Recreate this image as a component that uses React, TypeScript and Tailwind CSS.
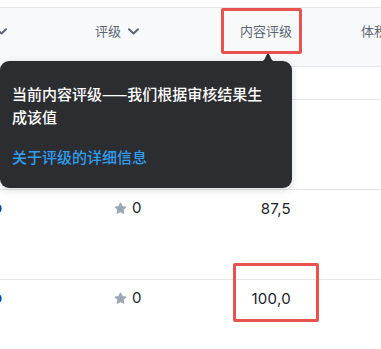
import React from "react";

function Chevron({ className = "" }: { className?: string }) {
  return (
    <svg className={className} width="11" height="7" viewBox="0 0 11 7" fill="none">
      <path d="M1 1.2 L5.5 5.5 L10 1.2" stroke="#5b6573" strokeWidth="2" strokeLinecap="round" strokeLinejoin="round" />
    </svg>
  );
}

function Star() {
  return (
    <svg width="13" height="13" viewBox="0 0 24 24" fill="#9aa7b4" stroke="#9aa7b4" strokeWidth="2.5" strokeLinejoin="round">
      <path d="M12 2.5l2.9 6.1 6.6.8-4.9 4.6 1.3 6.6L12 17.3l-5.9 3.3 1.3-6.6-4.9-4.6 6.6-.8z" />
    </svg>
  );
}

function DataRow({ value, h, border }: { value: string; h: string; border: boolean }) {
  return (
    <div className={`flex ${h} ${border ? "border-b border-[#e4e6ea]" : ""}`}>
      <div className="w-[95px] shrink-0 overflow-hidden pt-[8px]">
        <div className="-ml-[7px] flex flex-col">
          <span className="text-[15px] leading-[20px] text-[#1e3a8a] font-semibold">o</span>
          <span className="text-[9px] leading-[12px] text-[#9aa1aa] -ml-[1px]">^</span>
        </div>
      </div>
      <div className="w-[115px] shrink-0 pt-[8px] pl-[19px] flex items-center gap-[5px] self-start">
        <Star />
        <span className="text-[15px] leading-[20px] text-[#1b1d2a]">0</span>
      </div>
      <div className="w-[95px] shrink-0 pt-[9px] pr-[14px] text-right text-[15px] leading-[20px] text-[#1b1d2a] tracking-[0.3px]">
        {value}
      </div>
      <div className="flex-1" />
    </div>
  );
}

export default function App() {
  return (
    <div className="relative w-[381px] h-[349px] overflow-hidden bg-white font-['Inter','Noto_Sans_CJK_SC',sans-serif]">
      <div className="h-[8px] border-b border-[#e4e6ea] bg-white" />
      <div className="flex h-[59px] bg-[#f8f9fb] border-b border-[#e4e6ea] pt-[13px] text-[13px] leading-[20px] text-[#5b6573] overflow-hidden">
        <div className="w-[95px] shrink-0 overflow-hidden">
          <div className="-ml-[4px] flex items-center h-[20px]">
            <Chevron />
          </div>
        </div>
        <div className="w-[115px] shrink-0 flex items-start gap-[7px]">
          <span className="font-['Noto_Sans_CJK_SC',sans-serif]">评级</span>
          <Chevron className="mt-[7px]" />
        </div>
        <div className="w-[95px] shrink-0 pr-[13px] text-right font-['Noto_Sans_CJK_SC',sans-serif]">内容评级</div>
        <div className="shrink-0 pl-[56px] whitespace-nowrap font-['Noto_Sans_CJK_SC',sans-serif]">体积</div>
      </div>
      <div className="h-[33px] border-b border-[#e4e6ea]" />
      <div className="h-[90px] border-b border-[#e4e6ea]" />
      <DataRow value="87,5" h="h-[90px]" border={true} />
      <DataRow value="100,0" h="h-[69px]" border={false} />

      {/* annotation boxes */}
      <div className="absolute left-[221px] top-[8px] w-[81px] h-[46px] border-[3px] border-[#e8524f] rounded-[2px]" />
      <div className="absolute left-[233px] top-[263px] w-[86px] h-[59px] border-[3px] border-[#e8524f] rounded-[2px]" />

      {/* tooltip */}
      <svg className="absolute left-[257px] top-[52px]" width="22" height="11" viewBox="0 0 22 11">
        <path d="M0 11 Q7 11 9 4 Q11 -1 13 4 Q15 11 22 11 Z" fill="#2c2d31" />
      </svg>
      <div className="absolute left-0 top-[61px] w-[292px] h-[127px] rounded-[9px] bg-[#2c2d31] shadow-[0_2px_8px_rgba(0,0,0,0.15)] pl-[12px] pr-[20px] pt-[21px] font-['Noto_Sans_CJK_SC',sans-serif]">
        <p className="text-[15px] leading-[23px] text-white font-medium">当前内容评级——我们根据审核结果生成该值</p>
        <p className="mt-[17px] text-[15px] leading-[23px] text-[#2f9ef0] font-medium">关于评级的详细信息</p>
      </div>
    </div>
  );
}
